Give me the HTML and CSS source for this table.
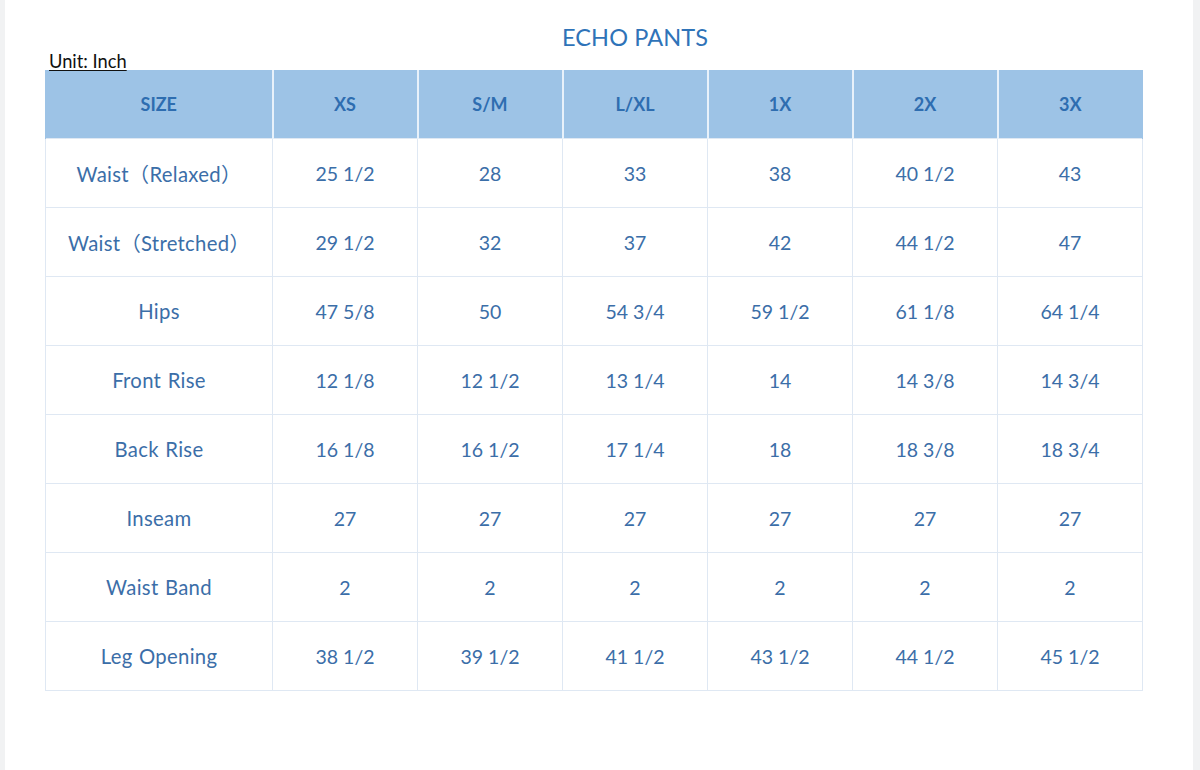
FILE: index.html
```html
<!DOCTYPE html>
<html>
<head>
<meta charset="utf-8">
<link rel="stylesheet" href="styles.css">
</head>
<body>
<div class="page">
  <div class="title">ECHO PANTS</div>
  <div class="unit">Unit: Inch</div>
  <table class="chart">
    <colgroup>
      <col class="c-first"><col class="c-size"><col class="c-size"><col class="c-size"><col class="c-size"><col class="c-size"><col class="c-size">
    </colgroup>
    <thead>
      <tr><th>SIZE</th><th>XS</th><th>S/M</th><th>L/XL</th><th>1X</th><th>2X</th><th>3X</th></tr>
    </thead>
    <tbody>
      <tr><td class="label">Waist（Relaxed）</td><td>25 1/2</td><td>28</td><td>33</td><td>38</td><td>40 1/2</td><td>43</td></tr>
      <tr><td class="label">Waist（Stretched）</td><td>29 1/2</td><td>32</td><td>37</td><td>42</td><td>44 1/2</td><td>47</td></tr>
      <tr><td class="label">Hips</td><td>47 5/8</td><td>50</td><td>54 3/4</td><td>59 1/2</td><td>61 1/8</td><td>64 1/4</td></tr>
      <tr><td class="label">Front Rise</td><td>12 1/8</td><td>12 1/2</td><td>13 1/4</td><td>14</td><td>14 3/8</td><td>14 3/4</td></tr>
      <tr><td class="label">Back Rise</td><td>16 1/8</td><td>16 1/2</td><td>17 1/4</td><td>18</td><td>18 3/8</td><td>18 3/4</td></tr>
      <tr><td class="label">Inseam</td><td>27</td><td>27</td><td>27</td><td>27</td><td>27</td><td>27</td></tr>
      <tr><td class="label">Waist Band</td><td>2</td><td>2</td><td>2</td><td>2</td><td>2</td><td>2</td></tr>
      <tr><td class="label">Leg Opening</td><td>38 1/2</td><td>39 1/2</td><td>41 1/2</td><td>43 1/2</td><td>44 1/2</td><td>45 1/2</td></tr>
    </tbody>
  </table>
</div>
</body>
</html>
```
FILE: styles.css
```css
html, body {
  margin: 0;
  padding: 0;
}
body {
  background: #f1f2f3;
  width: 1200px;
  height: 770px;
  overflow: hidden;
  font-family: "Lato", "Noto Sans CJK SC", sans-serif;
}
.page {
  background: #ffffff;
  margin: 0 7px 0 5px;
  height: 770px;
  padding-top: 22px;
  box-sizing: border-box;
}
.title {
  padding-left: 72px;
  text-align: center;
  color: #2f73b8;
  font-size: 23.5px;
  line-height: 30px;
  letter-spacing: 0.1px;
}
.unit {
  margin-left: 44px;
  font-size: 18.3px;
  line-height: 18px;
  color: #111;
  text-decoration: underline;
  text-underline-offset: 2px;
}
.chart {
  margin-left: 40px;
  border-collapse: collapse;
  table-layout: fixed;
  width: 1098px;
}
.c-first {
  width: 227px;
}
.c-size {
  width: 145px;
}
.chart th, .chart td {
  text-align: center;
  vertical-align: middle;
  padding: 0;
}
.chart th {
  background: #9dc3e6;
  color: #2e6db0;
  font-weight: bold;
  font-size: 18px;
  height: 68px;
  border-left: 2px solid #e8f1fa;
  border-right: 2px solid #e8f1fa;
}
.chart th:first-child {
  border-left: 1px solid #9dc3e6;
}
.chart th:last-child {
  border-right: 1px solid #9dc3e6;
}
.chart td {
  color: #3b6ea8;
  font-size: 19.5px;
  height: 68px;
  border: 1px solid #dfe8f3;
}
.chart .label {
  font-size: 20.3px;
  letter-spacing: 0.3px;
  word-spacing: 1px;
}
```
